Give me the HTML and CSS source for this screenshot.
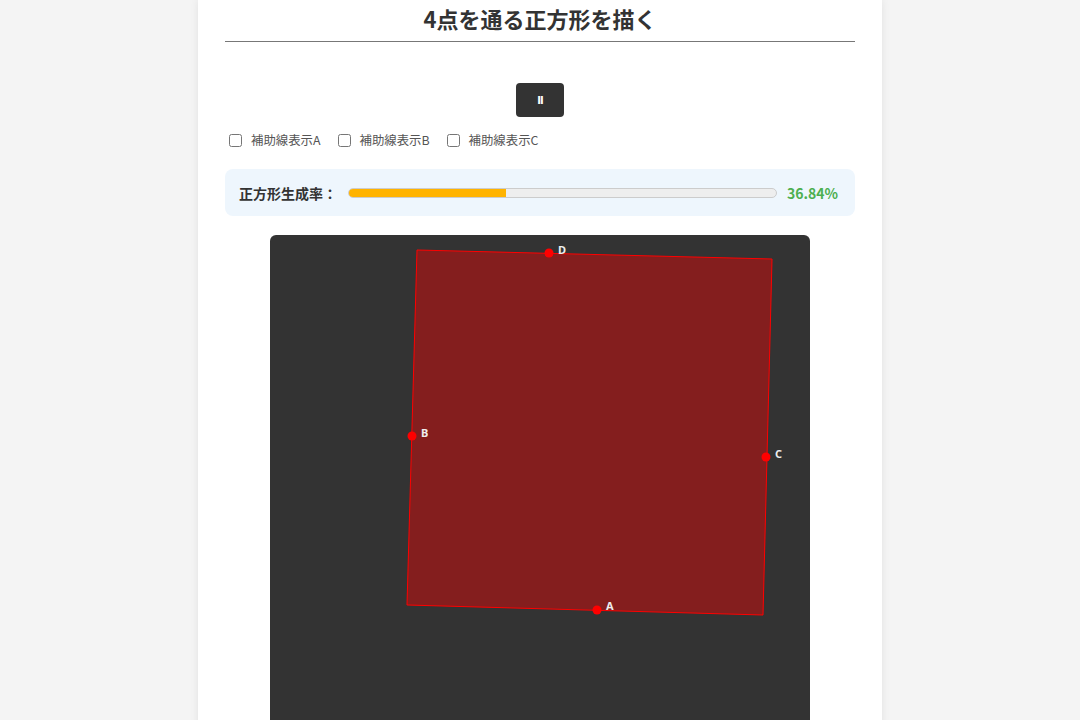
FILE: index.html
```html
<!DOCTYPE html>
<html lang="ja">
<head>
  <meta charset="UTF-8">
  <meta name="viewport" content="width=device-width, initial-scale=1.0">
  <title>4点を通る正方形を描く</title>
  <link rel="stylesheet" href="styles.css">
</head>
<body>
  <!-- メイン -->
  <div class="container">
    <h2 class="title">4点を通る正方形を描く</h2>

    <div class="controls">
      <button class="pause-btn" type="button">II</button>
    </div>

    <div class="options">
      <label class="option"><input type="checkbox"><span>補助線表示A</span></label>
      <label class="option"><input type="checkbox"><span>補助線表示B</span></label>
      <label class="option"><input type="checkbox"><span>補助線表示C</span></label>
    </div>

    <div class="rate-box">
      <span class="rate-label">正方形生成率：</span>
      <div class="rate-bar">
        <div class="rate-fill" style="width: 36.84%"></div>
      </div>
      <span class="rate-value">36.84%</span>
    </div>

    <div class="canvas-wrap">
      <svg class="board" width="540" height="540" viewBox="0 0 540 540">
        <polygon points="147,15 502,24 493,380 137,370" fill="rgba(255,0,0,0.4)" stroke="#ff0000" stroke-width="1"/>
        <circle cx="327" cy="375" r="4.5" fill="#ff0000"/>
        <circle cx="142" cy="201" r="4.5" fill="#ff0000"/>
        <circle cx="496" cy="222" r="4.5" fill="#ff0000"/>
        <circle cx="279" cy="18" r="4.5" fill="#ff0000"/>
        <text class="pt-label" x="336" y="375">A</text>
        <text class="pt-label" x="151" y="202">B</text>
        <text class="pt-label" x="505" y="223">C</text>
        <text class="pt-label" x="288" y="19">D</text>
      </svg>
    </div>
  </div>
</body>
</html>
```

FILE: styles.css
```css
/* 基本 */
body {
  margin: 0;
  background-color: #f4f4f4;
  font-family: "Noto Sans CJK JP", "Noto Sans", sans-serif;
  color: #333;
}

.container {
  width: 630px;
  margin: 0 auto;
  padding: 0 27px 40px;
  background-color: white;
  box-shadow: 0 0 8px rgba(0, 0, 0, 0.08);
  min-height: 720px;
}

.title {
  margin: 0;
  font-size: 22px;
  line-height: 36px;
  font-weight: bold;
  text-align: center;
  color: #333;
  padding-bottom: 5px;
  border-bottom: 1px solid #777;
}

/* ボタン */
.controls {
  display: flex;
  justify-content: center;
  margin-top: 41px;
}

.pause-btn {
  width: 48px;
  height: 34px;
  border: none;
  border-radius: 4px;
  background-color: #333;
  color: white;
  font-family: "DejaVu Sans", sans-serif;
  font-size: 10px;
  font-weight: bold;
  letter-spacing: -1px;
  cursor: pointer;
}

/* チェックボックス */
.options {
  display: flex;
  gap: 13px;
  margin-top: 13px;
  height: 20px;
  align-items: center;
}

.option {
  display: flex;
  align-items: center;
  font-size: 12.4px;
  color: #555;
}

.option input {
  margin: 0 0 0 4px;
  width: 13px;
  height: 13px;
}

.option span {
  margin-left: 9px;
}

/* 生成率 */
.rate-box {
  display: flex;
  align-items: center;
  margin-top: 19px;
  height: 47px;
  padding: 0 17px 0 14px;
  background-color: #eef6fd;
  border-radius: 8px;
}

.rate-label {
  font-size: 14px;
  font-weight: bold;
  color: #333;
  margin-right: 11px;
}

.rate-bar {
  flex: 1;
  height: 8px;
  background-color: #eee;
  border: 1px solid #ccc;
  border-radius: 5px;
  overflow: hidden;
}

.rate-fill {
  height: 100%;
  background-color: #ffb300;
}

.rate-value {
  margin-left: 10px;
  font-size: 14px;
  font-weight: bold;
  color: #4caf50;
}

/* キャンバス */
.canvas-wrap {
  display: flex;
  justify-content: center;
  margin-top: 19px;
}

.board {
  display: block;
  background-color: #333;
  border-radius: 6px;
}

.pt-label {
  fill: #eee;
  font-size: 11px;
  font-weight: bold;
  font-family: "Noto Sans", sans-serif;
}
```
